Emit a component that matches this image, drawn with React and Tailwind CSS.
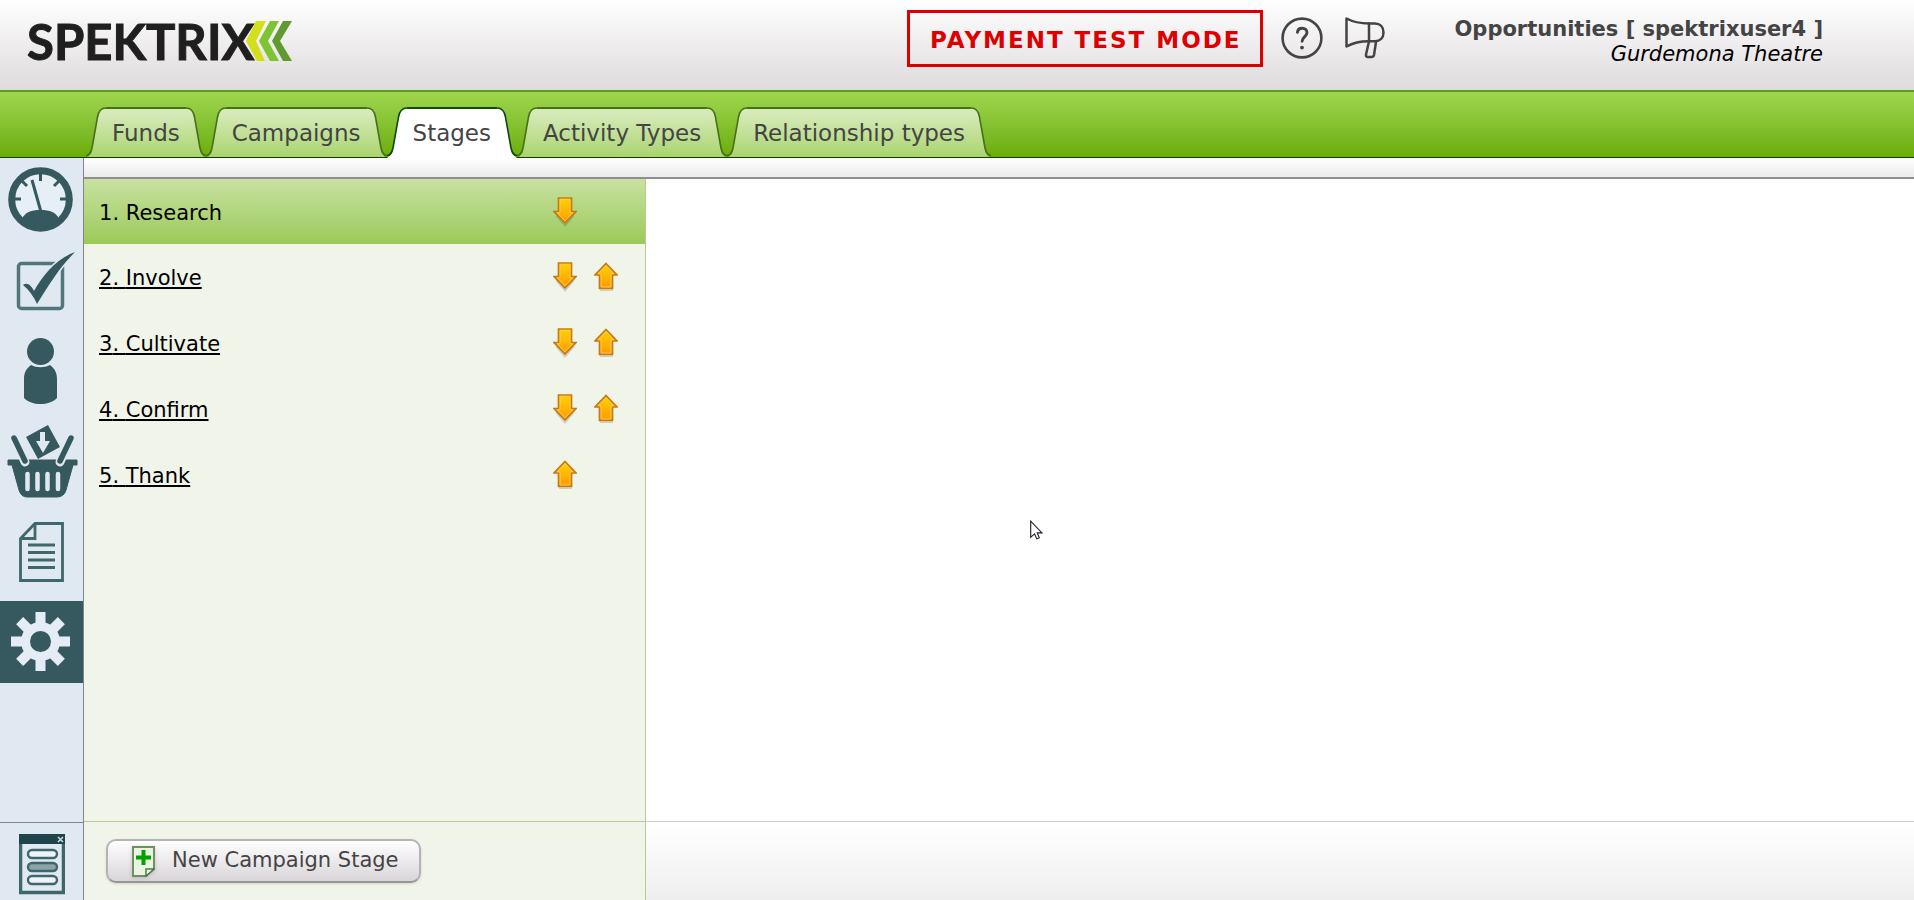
import React, { useState } from 'react';

const TABS = ['Funds', 'Campaigns', 'Stages', 'Activity Types', 'Relationship types'];

const INITIAL_STAGES = ['Research', 'Involve', 'Cultivate', 'Confirm', 'Thank'];

const Logo = () => (
    <a href="#home" className="flex items-center ml-[27px] h-[82px]">
        <span className="font-['Lato',sans-serif] font-bold text-[49px] leading-[82px] text-[#1f1f1f] [-webkit-text-stroke:1px_#1f1f1f]">
            SPEKTRIX
        </span>
        <svg viewBox="0 0 46 40" className="w-[46px] h-[40px] -ml-2" aria-hidden="true">
            <path d="M10 0h10L10 20l9 20H11L0 20z" fill="#d3df1c" />
            <path d="M24 0h9L22 20l11 20H24L13 20z" fill="#7ec334" />
            <path d="M37 0h9L34 20l12 20H37L26 20z" fill="#629a32" />
        </svg>
    </a>
);

const HelpIcon = () => (
    <svg viewBox="0 0 42 42" className="w-[42px] h-[42px]" fill="none" stroke="#444" strokeWidth="2.6" strokeLinecap="round">
        <circle cx="21" cy="21" r="19.400" />
        <path d="M16.400 15.400c.3-2.700 2.100-4.200 4.800-4.200s4.800 1.700 4.800 4.300c0 4.200-4.900 4.500-4.900 8.700" strokeWidth="2.900" />
        <circle cx="21" cy="30.600" r="1.900" fill="#444" stroke="none" />
    </svg>
);

const MegaphoneIcon = () => (
    <svg viewBox="0 0 40 42" className="w-[40px] h-[42px]" fill="none" stroke="#444" strokeWidth="2.5" strokeLinejoin="round" strokeLinecap="round">
        <path d="M1.500 1.500C9 5.500 16 6.500 24 6.500h6c5 0 8.500 3.500 8.500 9s-3.500 8.700-8.500 8.700h-6c-8 0-15 1-22.500 5.300z" />
        <path d="M24 6.500v17.700M24 24.500l-3 13c-.3 1.700.5 2.500 2 2.500h3.500c1.500 0 2.200-.7 2.500-2l2-13" />
    </svg>
);

const TabEdge = ({ active, flip }) => (
    <svg
        viewBox={active ? '0 0 20 51' : '0 0 20 50'}
        className={`w-5 ${active ? 'h-[51px]' : 'h-[50px]'} ${flip ? '-scale-x-100' : ''}`}
        aria-hidden="true"
    >
        <defs>
            <linearGradient id="tabFill" x1="0" y1="0" x2="0" y2="1">
                <stop offset="0.1" stopColor="#d6eab8" />
                <stop offset="1" stopColor="#aad46d" />
            </linearGradient>
        </defs>
        <path
            d={active
                ? 'M0 51C4 48 5 46 6 41L11 10C12 4 15 1 20 1V51z'
                : 'M2 50C4 48 5 45 6 41L11 10C12 4 15 1 20 1V50z'}
            fill={active ? '#fff' : 'url(#tabFill)'}
        />
        <path
            d="M0 48.500C4 48.500 5 45 6 41L11.500 10C12.500 4 15 1 20 1"
            fill="none"
            stroke={active ? '#0c4a0c' : '#47701a'}
            strokeWidth="1.600"
        />
    </svg>
);

const Tab = ({ label, active, onClick }) => (
    <button
        type="button"
        role="tab"
        aria-selected={active}
        onClick={onClick}
        className={`flex cursor-pointer ${active ? 'relative -mb-px h-[51px]' : 'h-[50px]'}`}
    >
        <TabEdge active={active} />
        <span
            className={`h-full px-1.5 border-t-2 text-[23px] leading-[48px] whitespace-nowrap text-[#444] ${
                active ? 'bg-white border-[#0c4a0c]' : 'border-[#47701a] bg-linear-to-b from-[#d6eab8] from-10% to-[#aad46d]'
            }`}
        >
            {label}
        </span>
        <TabEdge active={active} flip />
    </button>
);

const NAV_ITEMS = [
    {
        name: 'Dashboard',
        icon: (
            <g>
                <circle cx="40.500" cy="38.500" r="28.800" fill="#e6eff5" stroke="#35595e" strokeWidth="7" />
                <path d="M22 58c3-7 9-9 18.500-9s15.500 2 18.500 9c-5 6-11 9-18.500 9S27 64 22 58z" fill="#35595e" />
                <path d="M32 19l9 32M40.500 9v11M13 38h8M60 38h8M22 20l5 5M59 20l-5 5" stroke="#35595e" strokeWidth="3" />
            </g>
        ),
    },
    {
        name: 'Tasks',
        icon: (
            <g>
                <rect x="18.500" y="14.500" width="44" height="45" rx="3" fill="none" stroke="#52777b" strokeWidth="3.500" />
                <path
                    d="M23 36c4-3 8 0 11 6C43 26 56 10 75 3 60 18 50 34 37 55 34 48 29 41 23 36z"
                    fill="#35595e"
                    stroke="#e0e9f2"
                    strokeWidth="3"
                    paintOrder="stroke"
                />
            </g>
        ),
    },
    {
        name: 'Customers',
        icon: (
            <g fill="#35595e">
                <circle cx="40.500" cy="14.500" r="13.500" />
                <path d="M31 28c6 3 13 3 19 0 5 4 7 8 7 14v19c-8 8-25 8-33 0V42c0-6 2-10 7-14z" />
            </g>
        ),
    },
    {
        name: 'Sales',
        icon: (
            <g>
                <path d="M26 12l22-12 12 22-22 12z" fill="#35595e" />
                <path d="M8 35h69v5h-4l-7 25q-2 7-9 7H27q-6 0-8-7l-7-25H8z" fill="#35595e" stroke="#35595e" strokeLinejoin="round" />
                <path d="M14 13l11 24M71 13L60 37" stroke="#e0e9f2" strokeWidth="9" strokeLinecap="round" />
                <path d="M14 13l11 23M71 13L60 36" stroke="#35595e" strokeWidth="5.500" strokeLinecap="round" />
                <path d="M27.500 49v15M37.500 49v15M47.500 49v15M58 49v15" stroke="#e0e9f2" strokeWidth="4.500" strokeLinecap="round" />
                <path d="M40 7h5v9h5l-7 12-7-12h4z" fill="#e0e9f2" />
            </g>
        ),
    },
    {
        name: 'Reports',
        icon: (
            <g fill="none" stroke="#3f686c" strokeWidth="2.800">
                <path d="M35 10.500h27.500v57h-42V25.500z" />
                <path d="M35 10.500v15H20.500" />
                <path d="M28 32h27M28 39.500h27M28 47h27M28 54.500h27" />
            </g>
        ),
    },
    {
        name: 'Settings',
        active: true,
        icon: (
            <g fill="#e4edf5">
                {[0, 45, 90, 135].map((deg) => (
                    <rect key={deg} x="35.500" y="11" width="10" height="59" transform={`rotate(${deg} 40.500 40.500)`} />
                ))}
                <circle cx="40.500" cy="40.500" r="19.500" />
                <circle cx="40.500" cy="40.500" r="10.500" fill="#35595e" />
            </g>
        ),
    },
];

const Sidebar = () => (
    <nav className="w-[84px] shrink-0 flex flex-col border-r border-[#80868b] bg-[#e0e9f2]">
        <div className="flex-1 flex flex-col gap-1.5 pt-[3px]">
            {NAV_ITEMS.map((item) => (
                <a
                    key={item.name}
                    href={`#${item.name.toLowerCase()}`}
                    aria-label={item.name}
                    className={`block h-[82px] ${item.active ? 'bg-[#35595e]' : ''}`}
                >
                    <svg viewBox="0 0 83 82" className="w-[83px] h-[82px]">{item.icon}</svg>
                </a>
            ))}
        </div>
        <a href="#forms" aria-label="Forms" className="flex h-[78px] justify-center items-start pt-[11px] border-t border-[#80868b]">
            <svg viewBox="0 0 46 61" className="w-[46px] h-[61px]">
                <rect x="1.500" y="1.500" width="43" height="57" fill="#e0e9f2" stroke="#3f666b" strokeWidth="3.500" />
                <rect width="46" height="10" fill="#1e454b" />
                <path d="M39 3l5 5M44 3l-5 5" stroke="#cfdde2" strokeWidth="1.500" />
                <g stroke="#3f666b" strokeWidth="2.400">
                    <rect x="9" y="16" width="29" height="8" rx="4" fill="#edf3f8" />
                    <rect x="9" y="29" width="29" height="8" rx="4" fill="#8da3aa" />
                    <rect x="9" y="42" width="29" height="8" rx="4" fill="#edf3f8" />
                </g>
            </svg>
        </a>
    </nav>
);

const ArrowButton = ({ up, label, onClick }) => (
    <button type="button" aria-label={label} onClick={onClick} className="cursor-pointer">
        <svg viewBox="0 0 24 30" className="w-6 h-[30px]">
            <defs>
                <linearGradient id="arrowFill" x1="0" y1="0" x2="0" y2="1">
                    <stop offset="0" stopColor="#ffd400" />
                    <stop offset="1" stopColor="#ff9800" />
                </linearGradient>
            </defs>
            {up ? (
                <>
                    <path d="M6 27.500h13v1.500H6z" fill="#000" opacity="0.150" />
                    <path d="M12 1.500L23 13H18.500v13.300H5.500V13H1z" fill="url(#arrowFill)" stroke="#c67a10" strokeWidth="1.700" />
                    <path d="M12 3.800L19.600 11.800H16.900V25H7.100V11.800H4.400z" fill="none" stroke="#ffc95c" strokeWidth="0.900" />
                </>
            ) : (
                <>
                    <path d="M3 17l9 10.500L21 17v2.500L12 30 3 19.500z" fill="#000" opacity="0.150" />
                    <path d="M5.500 1h13v13.500H23L12 26 1 14.500h4.500z" fill="url(#arrowFill)" stroke="#c67a10" strokeWidth="1.700" />
                    <path d="M7.100 2.300h9.800v13.400h2.700L12 24 4.400 15.700h2.700z" fill="none" stroke="#ffc95c" strokeWidth="0.900" />
                </>
            )}
        </svg>
    </button>
);

const NewPageIcon = () => (
    <svg viewBox="0 0 23 31" className="w-[23px] h-[31px] drop-shadow-sm">
        <path d="M1 1h21v22l-8 7H1z" fill="#e9f4e2" stroke="#6d9160" strokeWidth="2" />
        <path d="M14 30v-7h8z" fill="#fff" stroke="#4d7a40" strokeWidth="1.500" />
        <path d="M9.500 4h4v5.500H19v4h-5.500V19h-4v-5.500H4v-4h5.500z" fill="#00a000" />
    </svg>
);

const Pointer = () => (
    <svg viewBox="0 0 13 20" className="absolute left-[1030px] top-[520px] w-[13px] h-5 pointer-events-none" aria-hidden="true">
        <path d="M.700 1.200V17.300L4.500 13.800 6.800 18.900 9.300 17.800 7.200 12.900H12z" fill="#fff" stroke="#1a1a2a" strokeWidth="1.100" />
    </svg>
);

const App = () => {
    const [activeTab, setActiveTab] = useState('Stages');
    const [stages, setStages] = useState(INITIAL_STAGES);
    const [selected, setSelected] = useState('Research');

    const moveStage = (index, step) => {
        const next = [...stages];
        [next[index], next[index + step]] = [next[index + step], next[index]];
        setStages(next);
    };

    return (
        <div className="relative min-h-screen flex flex-col bg-white font-['DejaVu_Sans',Verdana,sans-serif] text-black">
            <header className="flex h-[90px] items-start justify-between bg-linear-to-b from-white to-[#dedadd]">
                <Logo />
                <div className="flex items-start pr-[91px]">
                    <div className="mt-2.5 h-[57px] pl-5 pr-[18px] border-3 border-[#dd0000] text-[#dd0000] font-bold text-[23px] leading-[54px] tracking-[2px]">
                        PAYMENT TEST MODE
                    </div>
                    <button type="button" aria-label="Help" className="ml-[18px] mt-[17px] cursor-pointer">
                        <HelpIcon />
                    </button>
                    <button type="button" aria-label="Announcements" className="ml-[22px] mt-[17px] cursor-pointer">
                        <MegaphoneIcon />
                    </button>
                    <div className="ml-[70px] mt-[17px] text-right text-[21px] leading-[25px]">
                        <div className="font-bold text-[#444]">Opportunities [ spektrixuser4 ]</div>
                        <div className="italic">Gurdemona Theatre</div>
                    </div>
                </div>
            </header>

            <div role="tablist" className="flex h-[68px] items-end pl-[86px] border-t-2 border-t-[#5f9e14] border-b border-b-[#0b3d00] bg-linear-to-b from-[#9fd64d] to-[#6bad00]">
                {TABS.map((tab) => (
                    <Tab key={tab} label={tab} active={tab === activeTab} onClick={() => setActiveTab(tab)} />
                ))}
            </div>

            <div className="flex-1 flex">
                <Sidebar />
                <div className="flex-1 flex flex-col">
                    <div className="h-[21px] border-b-2 border-[#8f8d90] bg-linear-to-b from-white to-[#ebebed]" />
                    <div className="flex-1 flex">
                        <section className="w-[562px] flex flex-col border-r border-[#b4cc96] bg-[#f0f4e9]">
                            <ol className="flex-1">
                                {stages.map((stage, index) => (
                                    <li
                                        key={stage}
                                        className={`flex items-center justify-between h-[66px] first:h-[65px] pl-[15px] ${
                                            stage === selected ? 'bg-linear-to-b from-[#c8e1a0] to-[#9bca57]' : ''
                                        }`}
                                    >
                                        <a
                                            href={`#${stage.toLowerCase()}`}
                                            onClick={() => setSelected(stage)}
                                            className={`pt-0.5 text-[21px] leading-[30px] ${stage === selected ? '' : 'underline'}`}
                                        >
                                            {index + 1}. {stage}
                                        </a>
                                        <div className="flex w-[92px] gap-[17px]">
                                            {index < stages.length - 1 && (
                                                <ArrowButton label={`Move ${stage} down`} onClick={() => moveStage(index, 1)} />
                                            )}
                                            {index > 0 && (
                                                <ArrowButton up label={`Move ${stage} up`} onClick={() => moveStage(index, -1)} />
                                            )}
                                        </div>
                                    </li>
                                ))}
                            </ol>
                            <div className="h-[79px] pt-[17px] pl-[22px] border-t border-[#b4cc96]">
                                <button
                                    type="button"
                                    className="flex items-center h-[44px] pl-6 pr-5 gap-[17px] rounded-[10px] border-2 border-[#b4b2b5] border-b-[#989699] bg-linear-to-b from-white to-[#d9d5d9] shadow-sm text-[21px] text-[#444] cursor-pointer"
                                >
                                    <NewPageIcon />
                                    New Campaign Stage
                                </button>
                            </div>
                        </section>
                        <main className="flex-1 flex flex-col">
                            <div className="flex-1" />
                            <div className="h-[79px] border-t border-[#cfcfd1] bg-linear-to-b from-white to-[#eeeeef]" />
                        </main>
                    </div>
                </div>
            </div>
            <Pointer />
        </div>
    );
};

export default App;
